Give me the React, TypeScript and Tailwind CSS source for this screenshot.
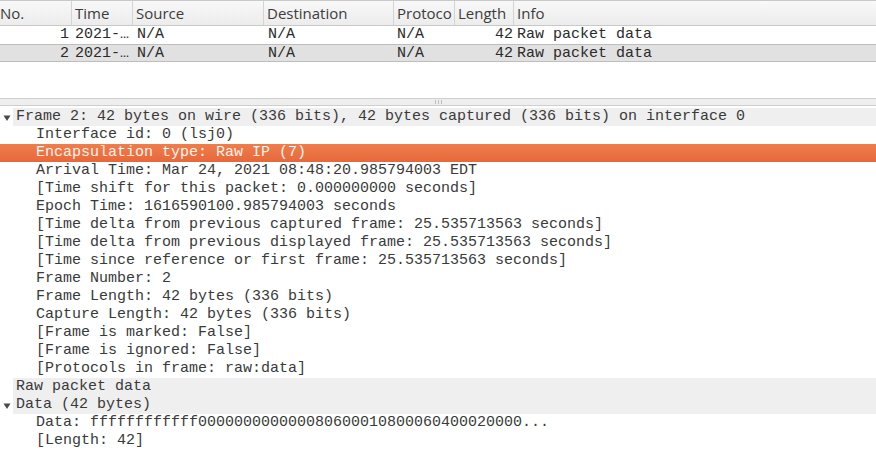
import React from 'react';

const mono = { fontFamily: '"Liberation Mono", "DejaVu Sans Mono", monospace' };

// header labels as they show on screen (Protocol column is clipped)
const columns = [
  { label: 'No.', w: 'w-[72px]' },
  { label: 'Time', w: 'w-[61px]' },
  { label: 'Source', w: 'w-[131px]' },
  { label: 'Destination', w: 'w-[130px]' },
  { label: 'Protoco', w: 'w-[61px]' },
  { label: 'Length', w: 'w-[59px]' },
  { label: 'Info', w: 'flex-1' },
];

const packets = [
  { no: 1, selected: false },
  { no: 2, selected: true },
];

type Node = { text: string; depth: number; expanded?: boolean; shaded?: boolean; active?: boolean };

const tree: Node[] = [
  { text: 'Frame 2: 42 bytes on wire (336 bits), 42 bytes captured (336 bits) on interface 0', depth: 0, expanded: true, shaded: true },
  { text: 'Interface id: 0 (lsj0)', depth: 1 },
  { text: 'Encapsulation type: Raw IP (7)', depth: 1, active: true },
  { text: 'Arrival Time: Mar 24, 2021 08:48:20.985794003 EDT', depth: 1 },
  { text: '[Time shift for this packet: 0.000000000 seconds]', depth: 1 },
  { text: 'Epoch Time: 1616590100.985794003 seconds', depth: 1 },
  { text: '[Time delta from previous captured frame: 25.535713563 seconds]', depth: 1 },
  { text: '[Time delta from previous displayed frame: 25.535713563 seconds]', depth: 1 },
  { text: '[Time since reference or first frame: 25.535713563 seconds]', depth: 1 },
  { text: 'Frame Number: 2', depth: 1 },
  { text: 'Frame Length: 42 bytes (336 bits)', depth: 1 },
  { text: 'Capture Length: 42 bytes (336 bits)', depth: 1 },
  { text: '[Frame is marked: False]', depth: 1 },
  { text: '[Frame is ignored: False]', depth: 1 },
  { text: '[Protocols in frame: raw:data]', depth: 1 },
  { text: 'Raw packet data', depth: 0, shaded: true },
  { text: 'Data (42 bytes)', depth: 0, expanded: true, shaded: true },
  { text: 'Data: ffffffffffff000000000000080600010800060400020000...', depth: 1 },
  { text: '[Length: 42]', depth: 1 },
];

function Caret() {
  return (
    <svg width="8" height="8" viewBox="0 0 8 8" className="absolute left-[3px] top-[6px]">
      <path d="M0.5 1.5 L7.5 1.5 L4 7 Z" fill="#4a4a4a" />
    </svg>
  );
}

export default function App() {
  return (
    <div className="w-[876px] h-[459px] overflow-hidden bg-white flex flex-col text-[#333]">
      {/* packet list */}
      <div className="h-[98px] flex flex-col">
        <div
          className="h-[26px] flex border-t border-b border-[#c9c9c9] bg-gradient-to-b from-[#f8f8f8] to-[#ececec] text-[15px] text-[#3c3c3c]"
          style={{ fontFamily: '"Open Sans", "Noto Sans", sans-serif' }}
        >
          {columns.map((c, i) => (
            <div
              key={c.label}
              className={`${c.w} shrink-0 overflow-hidden whitespace-nowrap leading-[25px] ${i === 0 ? 'pl-0' : 'pl-[3px]'} ${i < columns.length - 1 ? 'border-r border-[#d4d4d4]' : ''}`}
            >
              {c.label}
            </div>
          ))}
        </div>
        {packets.map((p) => (
          <div
            key={p.no}
            className={`flex h-[18px] text-[15px] leading-[18px] text-[#2b2b2b] ${p.selected ? 'bg-[#e1e1e1] border-t border-b border-[#bdbdbd]' : ''}`}
            style={mono}
          >
            <div className="w-[72px] shrink-0 text-right pr-[3px]">{p.no}</div>
            <div className="w-[61px] shrink-0 pl-[3px] whitespace-nowrap overflow-hidden">2021-…</div>
            <div className="w-[131px] shrink-0 pl-[4px]">N/A</div>
            <div className="w-[130px] shrink-0 pl-[4px]">N/A</div>
            <div className="w-[61px] shrink-0 pl-[3px]">N/A</div>
            <div className="w-[59px] shrink-0 text-right pr-[1px]">42</div>
            <div className="flex-1 pl-[3px] whitespace-nowrap">Raw packet data</div>
          </div>
        ))}
      </div>

      {/* splitter */}
      <div className="h-[8px] border-t border-b border-[#cfcfcf] bg-[#eeeeee] flex justify-center items-center">
        <div className="flex gap-[2px] ml-[1px]">
          <span className="w-[1px] h-[4px] bg-[#bdbdbd]" />
          <span className="w-[1px] h-[4px] bg-[#bdbdbd]" />
          <span className="w-[1px] h-[4px] bg-[#bdbdbd]" />
        </div>
      </div>

      {/* details tree */}
      <div className="flex flex-col text-[15px] mt-[2px]" style={mono}>
        {tree.map((n, i) => (
          <div
            key={i}
            className={`relative h-[18px] leading-[18px] whitespace-nowrap ${
              n.active ? 'bg-gradient-to-b from-[#f07d4c] to-[#e7683a] text-[#fbf4ef]' : 'text-[#3a3a3a]'
            }`}
          >
            {n.expanded && <Caret />}
            {n.shaded && !n.active ? (
              <div className="ml-[13px] bg-[#efefef] pl-[3px] h-full">{n.text}</div>
            ) : (
              <div className={n.depth === 0 ? 'pl-[16px]' : 'pl-[36px]'}>{n.text}</div>
            )}
          </div>
        ))}
      </div>
    </div>
  );
}
